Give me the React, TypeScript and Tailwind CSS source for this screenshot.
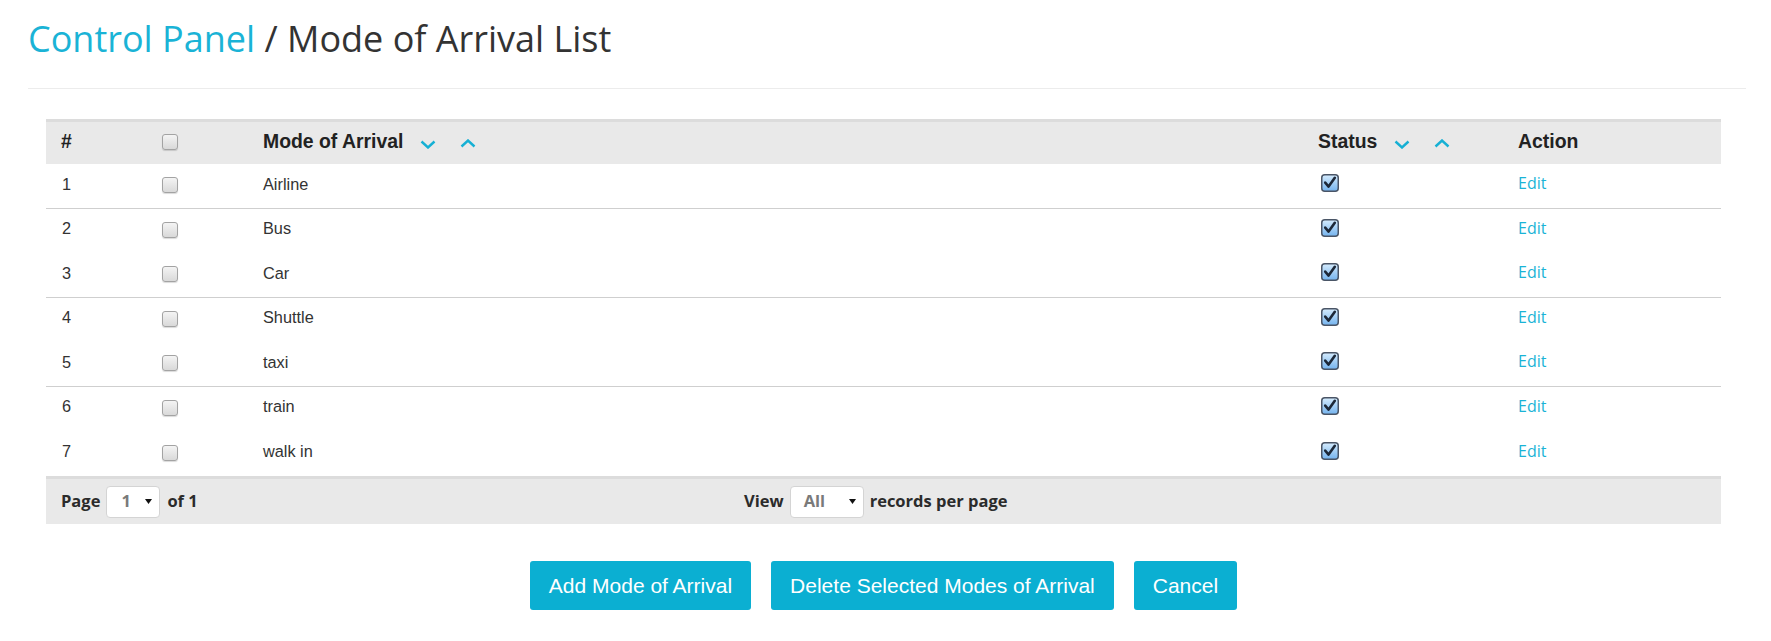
import React from 'react';

const rows = [
  { id: 1, name: 'Airline' },
  { id: 2, name: 'Bus' },
  { id: 3, name: 'Car' },
  { id: 4, name: 'Shuttle' },
  { id: 5, name: 'taxi' },
  { id: 6, name: 'train' },
  { id: 7, name: 'walk in' },
];

// rows 1, 3 and 5 carry a divider below them
const divided = new Set([1, 3, 5]);

function EmptyBox() {
  return (
    <span className="block h-[16px] w-[16px] rounded-[3px] border border-[#a3a3a3] bg-gradient-to-b from-[#f4f4f4] to-[#d9d9d9] shadow-[0_1px_1px_rgba(0,0,0,0.15)]" />
  );
}

function CheckedBox() {
  return (
    <svg width="18" height="18" viewBox="0 0 18 18" className="block">
      <defs>
        <linearGradient id="cbfill" x1="0" y1="0" x2="0" y2="1">
          <stop offset="0" stopColor="#d6ecfd" />
          <stop offset="1" stopColor="#74b3ee" />
        </linearGradient>
      </defs>
      <rect x="0.75" y="0.75" width="16.5" height="16.5" rx="3" fill="url(#cbfill)" stroke="#4a5566" strokeWidth="1.5" />
      <path d="M4.2 8.6 L7.6 12.6 L13.8 3.8" fill="none" stroke="#1d2838" strokeWidth="2.6" strokeLinecap="round" strokeLinejoin="round" />
    </svg>
  );
}

function SortArrows() {
  return (
    <span className="ml-[17px] mt-[8px] flex items-start gap-[24px]">
      <svg width="16" height="9" viewBox="0 0 16 9">
        <polyline points="1.5,1.5 8,7.5 14.5,1.5" fill="none" stroke="#16b0d4" strokeWidth="2.4" />
      </svg>
      <svg width="16" height="9" viewBox="0 0 16 9" className="-mt-[1px]">
        <polyline points="1.5,7.5 8,1.5 14.5,7.5" fill="none" stroke="#16b0d4" strokeWidth="2.4" />
      </svg>
    </span>
  );
}

function FakeSelect({ value, width, pad }: { value: string; width: string; pad: string }) {
  return (
    <div className={`${width} ${pad} flex h-[32px] items-center justify-between rounded-[4px] border border-[#d4d4d4] bg-white pr-[7px]`}>
      <span className="text-[16.5px] font-bold leading-none text-[#7a7a7a]">{value}</span>
      <svg width="7" height="5" viewBox="0 0 7 5">
        <polygon points="0,0 7,0 3.5,5" fill="#111" />
      </svg>
    </div>
  );
}

export default function App() {
  return (
    <div className="h-[641px] w-full bg-white font-['Open_Sans',sans-serif] text-[#333]">
      <div className="ml-[28px] mr-[25px] border-b border-[#ececec] pb-[31px] pt-[21px]">
        <h1 className="text-[36px] font-normal leading-none text-[#333]">
          <span className="text-[#1ab3d6]">Control Panel</span> / Mode of Arrival List
        </h1>
      </div>

      <div className="ml-[46px] mt-[30px] w-[1675px]">
        {/* header */}
        <div className="flex h-[45px] items-start border-t-[3px] border-[#dcdcdc] bg-[#e9e9e9] pl-[15px] font-['Liberation_Sans',Arial,sans-serif] text-[19.4px] font-bold leading-none text-[#222]">
          <div className="w-[101px] pt-[10px]">#</div>
          <div className="w-[101px] pt-[12px]">
            <EmptyBox />
          </div>
          <div className="flex w-[1055px] pt-[10px]">
            <span>Mode of Arrival</span>
            <SortArrows />
          </div>
          <div className="flex w-[200px] pt-[10px]">
            <span>Status</span>
            <SortArrows />
          </div>
          <div className="pt-[10px]">Action</div>
        </div>

        {/* body */}
        {rows.map((r) => (
          <div
            key={r.id}
            className={`flex h-[44.6px] items-start pl-[15px] ${divided.has(r.id) ? 'border-b border-[#cfcfcf]' : ''}`}
          >
            <div className="w-[101px] pl-[1px] pt-[11.5px] font-['Liberation_Sans',Arial,sans-serif] text-[16.3px] leading-none text-[#333]">
              {r.id}
            </div>
            <div className="w-[101px] pt-[13px]">
              <EmptyBox />
            </div>
            <div className="w-[1055px] pt-[11.5px] font-['Liberation_Sans',Arial,sans-serif] text-[16.3px] leading-none text-[#333]">
              {r.name}
            </div>
            <div className="w-[200px] pl-[3px] pt-[10px]">
              <CheckedBox />
            </div>
            <div className="pt-[11px] text-[16px] leading-none">
              <a className="text-[#1ab3d6]">Edit</a>
            </div>
          </div>
        ))}

        {/* pager */}
        <div className="flex h-[48px] items-center border-t-[3px] border-[#dcdcdc] bg-[#e9e9e9] px-[15px] text-[16.5px] font-bold leading-none text-[#2b2b2b]">
          <div className="flex w-[683px] shrink-0 items-center">
            <span>Page</span>
            <div className="ml-[6px]">
              <FakeSelect value="1" width="w-[54px]" pad="pl-[14px]" />
            </div>
            <span className="ml-[7px]">of 1</span>
          </div>
          <div className="flex items-center">
            <span>View</span>
            <div className="ml-[6px]">
              <FakeSelect value="All" width="w-[74px]" pad="pl-[13px]" />
            </div>
            <span className="ml-[6px]">records per page</span>
          </div>
        </div>

        {/* actions */}
        <div className="mt-[37px] flex justify-center gap-[20px] font-['Liberation_Sans',Arial,sans-serif] text-[21px] leading-none text-white">
          <button className="h-[49px] rounded-[3px] bg-[#0bafd2] px-[19px]">Add Mode of Arrival</button>
          <button className="h-[49px] rounded-[3px] bg-[#0bafd2] px-[19px]">Delete Selected Modes of Arrival</button>
          <button className="h-[49px] rounded-[3px] bg-[#0bafd2] px-[19px]">Cancel</button>
        </div>
      </div>
    </div>
  );
}
